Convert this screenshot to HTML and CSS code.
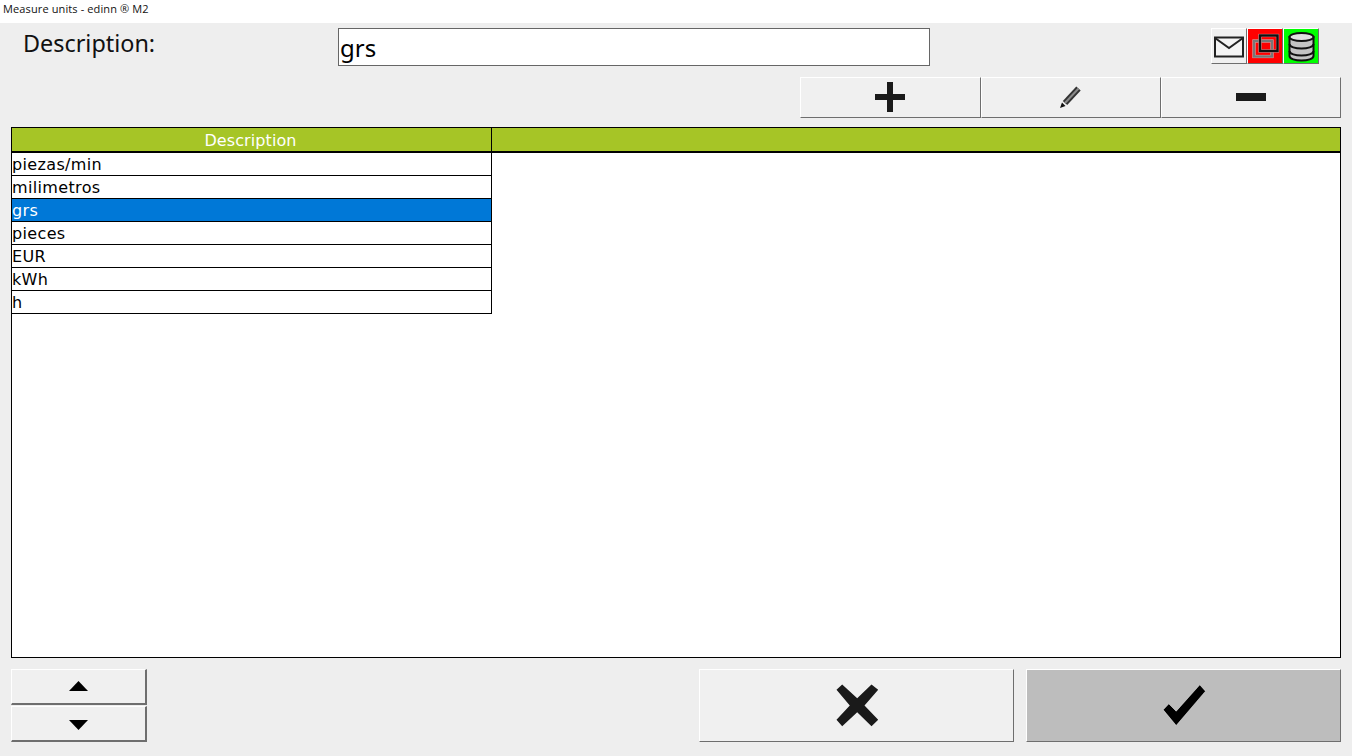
FILE: index.html
```html
<!DOCTYPE html>
<html lang="en">
  <head>
    <meta charset="UTF-8" />
    <title>Measure units - edinn M2</title>
    <link rel="stylesheet" href="styles.css">
  </head>
  <body>
    <div class="title-bar">Measure units - edinn ® M2</div>

    <div class="top-row">
      <div class="desc-label">Description:</div>
      <input class="desc-input" type="text" value="grs" />
      <div class="status-icons">
        <div class="status-icon">
          <svg width="34" height="34" viewBox="0 0 34 34">
            <rect x="3" y="8.5" width="28" height="19" fill="#f4f4f4" stroke="#222" stroke-width="2" />
            <path d="M3 9 L17 19 L31 9" fill="none" stroke="#222" stroke-width="2" />
          </svg>
        </div>
        <div class="status-icon red">
          <svg width="34" height="34" viewBox="0 0 34 34">
            <rect x="6" y="12" width="18" height="15.5" fill="none" stroke="#f4b0b0" stroke-width="3.2" />
            <rect x="6" y="12" width="18" height="15.5" fill="none" stroke="#777" stroke-width="2.5" />
            <rect x="12" y="6.5" width="17.5" height="15.5" fill="none" stroke="#f4b0b0" stroke-width="3.2" />
            <rect x="12" y="6.5" width="17.5" height="15.5" fill="none" stroke="#111" stroke-width="2.5" />
          </svg>
        </div>
        <div class="status-icon green">
          <svg width="34" height="34" viewBox="0 0 34 34">
            <path d="M5.5 8 V27 C5.5 33 29.5 33 29.5 27 V8 Z" fill="#c4c4c4" stroke="#111" stroke-width="2" />
            <ellipse cx="17.5" cy="8" rx="12" ry="4" fill="#e0e0e0" stroke="#111" stroke-width="2" />
            <path d="M5.5 15 C5.5 21 29.5 21 29.5 15 M5.5 22 C5.5 28 29.5 28 29.5 22" fill="none" stroke="#111" stroke-width="2" />
          </svg>
        </div>
      </div>
    </div>

    <div class="toolbar">
      <button class="tool-btn">
        <svg width="30" height="30" viewBox="0 0 30 30"><path d="M12 0 H18 V12 H30 V18 H18 V30 H12 V18 H0 V12 H12 Z" fill="#1a1a1a" /></svg>
      </button>
      <button class="tool-btn">
        <svg width="24" height="24" viewBox="0 0 24 24">
          <path d="M19.5 3.5 L6 18" fill="none" stroke="#333" stroke-width="6" />
          <path d="M19.5 3.5 L6 18" fill="none" stroke="#8a8a8a" stroke-width="2" />
          <path d="M3 17.5 L6.5 21 L1 23 Z" fill="#111" />
        </svg>
      </button>
      <button class="tool-btn">
        <svg width="30" height="8" viewBox="0 0 30 8"><rect width="30" height="8" fill="#1a1a1a" /></svg>
      </button>
    </div>

    <div class="grid">
      <div class="grid-head">
        <div class="head-cell">Description</div>
        <div class="head-rest"></div>
      </div>
      <div class="grid-row">piezas/min</div>
      <div class="grid-row">milimetros</div>
      <div class="grid-row selected">grs</div>
      <div class="grid-row">pieces</div>
      <div class="grid-row">EUR</div>
      <div class="grid-row">kWh</div>
      <div class="grid-row">h</div>
    </div>

    <div class="bottom-row">
      <div class="arrows">
        <button class="arrow-btn up">
          <svg width="19" height="10" viewBox="0 0 19 10"><path d="M9.5 0 L19 10 H0 Z" fill="#000" /></svg>
        </button>
        <button class="arrow-btn down">
          <svg width="19" height="10" viewBox="0 0 19 10"><path d="M0 0 H19 L9.5 10 Z" fill="#000" /></svg>
        </button>
      </div>
      <div class="actions">
        <button class="action-btn">
          <svg width="44" height="44" viewBox="0 0 44 44"><path d="M7.2 .5 L22.2 14.2 L36.5 .5 L43.2 5.8 L29.5 21.5 L43.2 35.8 L36.5 42.2 L22.2 28.2 L7.2 42.2 L1.5 35.8 L14.8 21.5 L1.5 5.8 Z" fill="#1a1a1a" /></svg>
        </button>
        <button class="action-btn ok">
          <svg width="44" height="44" viewBox="0 0 44 44"><path d="M37.8 .8 L43.5 7.2 L14.2 41.5 L1.2 25.8 L6.8 19.8 L14.2 27.2 Z" fill="#000" stroke="#fff" stroke-width=".5" /></svg>
        </button>
      </div>
    </div>
  </body>
</html>
```

FILE: styles.css
```css
* {
  box-sizing: border-box;
  font-family: "DejaVu Sans", sans-serif;
}

body {
  margin: 0;
  width: 1352px;
  height: 756px;
  overflow: hidden;
  background-color: #eeeeee;
  display: flex;
  flex-direction: column;
}

button {
  padding: 0;
  display: flex;
  align-items: center;
  justify-content: center;
  background-color: #f0f0f0;
  border: 1px solid #6e6e6e;
  border-top-color: #fff;
  border-left-color: #fff;
}

.title-bar {
  height: 23px;
  background-color: #fff;
  padding: 2px 0 0 3px;
  font-family: "Open Sans", sans-serif;
  font-size: 11px;
  letter-spacing: 0.12px;
  line-height: 14px;
  color: #111;
}

.top-row {
  height: 49px;
  padding: 5px 33px 0 23px;
  display: flex;
  align-items: flex-start;
}

.desc-label {
  width: 315px;
  font-family: "Noto Sans", sans-serif;
  font-size: 23.4px;
  line-height: 30px;
  color: #111;
}

.desc-input {
  width: 592px;
  height: 38px;
  padding: 0 1px;
  border: 1px solid #666;
  background: #fff;
  font-family: "Noto Sans", sans-serif;
  font-size: 24px;
  color: #000;
  outline: none;
}

.status-icons {
  margin-left: auto;
  display: flex;
}

.status-icon {
  width: 36px;
  height: 36px;
  display: flex;
  align-items: center;
  justify-content: center;
  background-color: #f0f0f0;
  border: 1px solid #6e6e6e;
  border-top-color: #fff;
  border-left-color: #fff;
}

.status-icon.red {
  background-color: #ff0000;
}

.status-icon.green {
  background-color: #00ff00;
}

.toolbar {
  height: 46px;
  padding: 5px 11px 0 800px;
  display: flex;
  align-items: flex-start;
}

.tool-btn {
  width: 180px;
  height: 41px;
  padding: 0 1px 1px 0;
}

.tool-btn:first-child {
  width: 181px;
}

.grid {
  height: 531px;
  margin: 9px 11px 0;
  background-color: #fff;
  border: 1px solid #000;
}

.grid-head {
  height: 25px;
  display: flex;
  background-color: #a6c526;
  border-bottom: 2px solid #000;
}

.head-cell {
  width: 480px;
  border-right: 1px solid #000;
  padding-right: 2px;
  text-align: center;
  color: #fff;
  font-size: 16px;
  letter-spacing: 0.1px;
  line-height: 25px;
}

.head-rest {
  flex: 1;
}

.grid-row {
  width: 480px;
  height: 23px;
  border-bottom: 1px solid #000;
  border-right: 1px solid #000;
  font-size: 16px;
  letter-spacing: 0.35px;
  line-height: 24px;
  color: #000;
  white-space: nowrap;
}

.grid-row.selected {
  background-color: #0078d7;
  color: #fff;
}

.bottom-row {
  margin-top: 11px;
  padding: 0 11px;
  display: flex;
  justify-content: space-between;
}

.arrows {
  display: flex;
  flex-direction: column;
  gap: 1px;
}

.arrow-btn {
  width: 136px;
  height: 36px;
  border-bottom-width: 2px;
  border-right-width: 2px;
}

.arrow-btn.up {
  padding-bottom: 1px;
}

.arrow-btn.down {
  padding-top: 2px;
}

.actions {
  display: flex;
  gap: 12px;
}

.action-btn {
  width: 315px;
  height: 73px;
}

.action-btn.ok {
  background-color: #bdbdbd;
}
```
